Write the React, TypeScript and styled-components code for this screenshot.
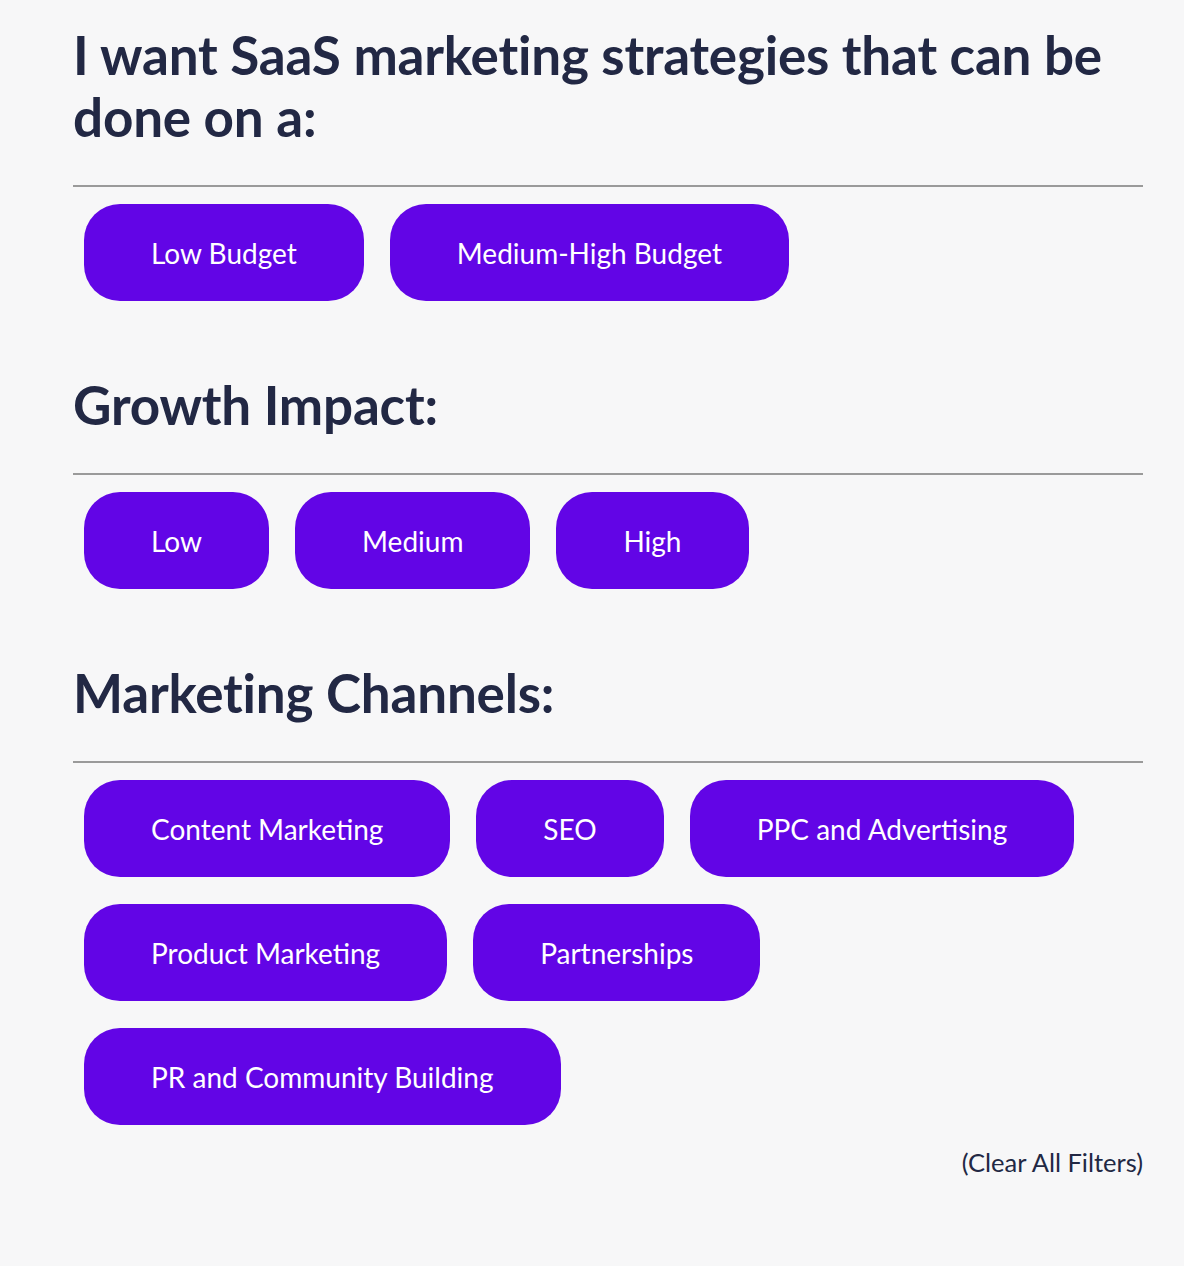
import React from 'react'
import styled, { createGlobalStyle } from 'styled-components'

const colors = {
  page: '#f7f7f8',
  ink: '#222844',
  rule: '#9a9a9a',
  purple: '#6205e6',
  white: '#ffffff',
}

const GlobalStyle = createGlobalStyle`
  html, body {
    margin: 0;
    padding: 0;
    background: ${colors.page};
  }
  body {
    font-family: Lato, 'Noto Sans', sans-serif;
    color: ${colors.ink};
  }
`

interface FilterGroup {
  title: string
  options: string[]
}

const groups: FilterGroup[] = [
  {
    title: 'I want SaaS marketing strategies that can be done on a:',
    options: ['Low Budget', 'Medium-High Budget'],
  },
  {
    title: 'Growth Impact:',
    options: ['Low', 'Medium', 'High'],
  },
  {
    title: 'Marketing Channels:',
    options: [
      'Content Marketing',
      'SEO',
      'PPC and Advertising',
      'Product Marketing',
      'Partnerships',
      'PR and Community Building',
    ],
  },
]

const App = () => {
  return (
    <>
      <GlobalStyle />
      <StyledPage>
        {groups.map((group) => (
          <StyledSection key={group.title}>
            <StyledHeading>{group.title}</StyledHeading>
            <StyledRule />
            <StyledButtonList>
              {group.options.map((option) => (
                <StyledFilterButton key={option} type="button">
                  {option}
                </StyledFilterButton>
              ))}
            </StyledButtonList>
          </StyledSection>
        ))}
        <StyledFooter>
          <StyledClearLink href="#">(Clear All Filters)</StyledClearLink>
        </StyledFooter>
      </StyledPage>
    </>
  )
}
export default App

const StyledPage = styled.main`
  width: 1070px;
  margin-left: 73px;
  padding-top: 24px;
  min-height: 1242px;
`
const StyledSection = styled.section`
  margin-bottom: 73px;
  &:last-of-type {
    margin-bottom: 22px;
  }
`
const StyledHeading = styled.h2`
  margin: 0;
  font-size: 53px;
  line-height: 62px;
  font-weight: 700;
  letter-spacing: -0.2px;
  color: ${colors.ink};
`
const StyledRule = styled.hr`
  margin: 37px 0 0;
  border: 0;
  height: 2px;
  background: ${colors.rule};
`
const StyledButtonList = styled.div`
  display: flex;
  flex-wrap: wrap;
  gap: 27px 26px;
  padding: 17px 0 0 11px;
`
const StyledFilterButton = styled.button`
  height: 97px;
  padding: 0 67px;
  border: 0;
  border-radius: 36px;
  background: ${colors.purple};
  color: ${colors.white};
  font-family: Lato, 'Noto Sans', sans-serif;
  font-size: 28px;
  font-weight: 400;
  cursor: pointer;
`
const StyledFooter = styled.div`
  display: flex;
  justify-content: flex-end;
`
const StyledClearLink = styled.a`
  font-size: 25.5px;
  color: ${colors.ink};
  text-decoration: none;
`
